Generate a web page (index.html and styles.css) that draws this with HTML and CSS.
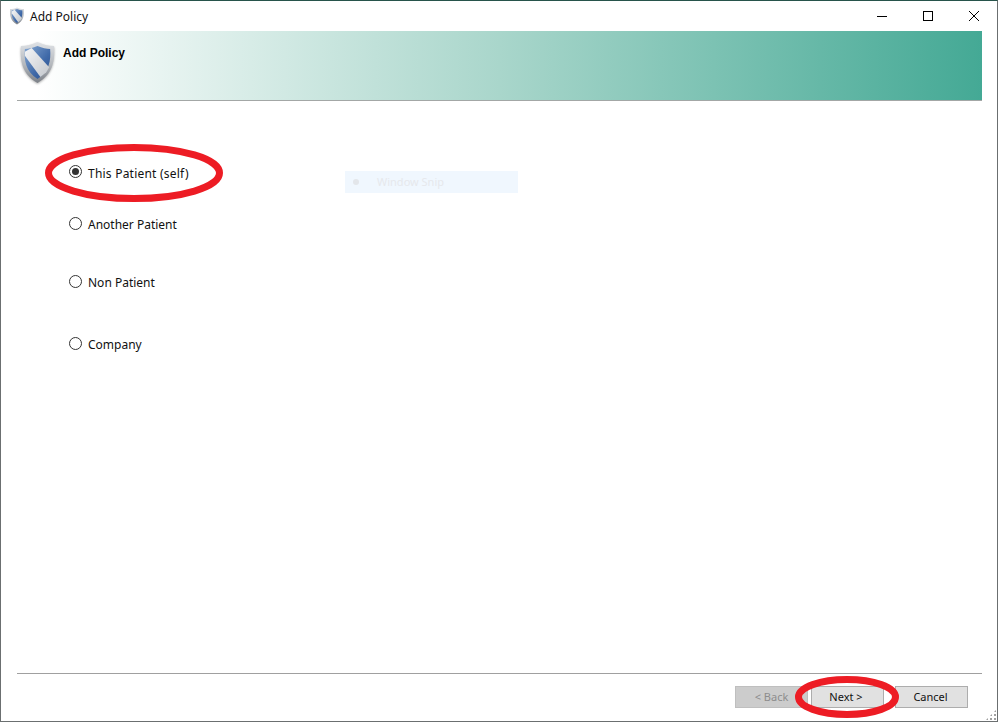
FILE: index.html
```html
<!DOCTYPE html>
<html lang="en">
<head>
<meta charset="UTF-8">
<title>Add Policy</title>
<link rel="stylesheet" href="styles.css">
</head>
<body>
<svg width="0" height="0" class="defs">
    <defs>
        <linearGradient id="rim" x1="0" y1="0" x2="0" y2="1">
            <stop offset="0" stop-color="#dfe2e6"/>
            <stop offset="0.55" stop-color="#b4b8bd"/>
            <stop offset="1" stop-color="#7b8087"/>
        </linearGradient>
        <linearGradient id="blue" x1="0" y1="0" x2="1" y2="1">
            <stop offset="0" stop-color="#86a8d2"/>
            <stop offset="0.6" stop-color="#3f69a8"/>
            <stop offset="1" stop-color="#2a4f8c"/>
        </linearGradient>
        <linearGradient id="stripe" x1="0" y1="0" x2="1" y2="1">
            <stop offset="0" stop-color="#f4f5f7"/>
            <stop offset="1" stop-color="#c3c7cc"/>
        </linearGradient>
        <symbol id="shield" viewBox="0 0 36 44">
            <path d="M18 1 C24 4 29 5 35 5 C36 20 34 34 18 43 C2 34 0 20 1 5 C7 5 12 4 18 1 Z" fill="url(#rim)"/>
            <path d="M18 5 C23 7 27 8 31 8 C32 20 30 31 18 39 C6 31 4 20 5 8 C9 8 13 7 18 5 Z" fill="url(#blue)"/>
            <path d="M5 15 L5 11 L12 7 L30 27 L27 32 L21 37 Z" fill="url(#stripe)"/>
        </symbol>
    </defs>
</svg>
<div class="window">
    <div class="titlebar">
        <svg class="title-icon"><use href="#shield"/></svg>
        <span class="title-text">Add Policy</span>
        <div class="controls">
            <svg class="control" viewBox="0 0 46 30"><path d="M18 15.5 H28" stroke="#000" fill="none"/></svg>
            <svg class="control" viewBox="0 0 46 30"><rect x="18.5" y="10.5" width="9" height="9" stroke="#000" fill="none"/></svg>
            <svg class="control" viewBox="0 0 46 30"><path d="M18 10 L28 20 M28 10 L18 20" stroke="#000" fill="none"/></svg>
        </div>
    </div>
    <div class="banner">
        <svg class="banner-icon"><use href="#shield"/></svg>
        <span class="banner-title">Add Policy</span>
    </div>
    <div class="options">
        <div class="option option-self"><span class="radio radio-on"></span>This Patient (self)</div>
        <div class="option option-another"><span class="radio"></span>Another Patient</div>
        <div class="option option-non"><span class="radio"></span>Non Patient</div>
        <div class="option option-company"><span class="radio"></span>Company</div>
    </div>
    <div class="footer">
        <button class="btn btn-disabled">&lt; Back</button>
        <button class="btn btn-next">Next &gt;</button>
        <button class="btn btn-cancel">Cancel</button>
    </div>
    <div class="grip"></div>

    <!-- faded leftover from the snipping tool -->
    <div class="ghost"><span class="ghost-dot"></span>Window Snip</div>

    <!-- red marker rings drawn over the screenshot -->
    <svg class="ring ring-self" viewBox="0 0 178 58"><ellipse cx="89" cy="29" rx="85.5" ry="25.5"/></svg>
    <svg class="ring ring-next" viewBox="0 0 104 42"><ellipse cx="52" cy="21" rx="48.5" ry="17.5"/></svg>
</div>
</body>
</html>
```

FILE: styles.css
```css
* {
    box-sizing: border-box;
}
body {
    margin: 0;
    background-color: white;
    font-family: "Noto Sans", Tahoma, sans-serif;
    font-size: 12px;
    color: #111;
}
.defs {
    display: block;
    height: 0;
}
.window {
    position: relative;
    display: flex;
    flex-direction: column;
    width: 998px;
    height: 722px;
    background-color: white;
    border: 1px solid #6b6f70;
    border-top-color: #27544b;
    overflow: hidden;
}
.titlebar {
    display: flex;
    align-items: center;
    height: 30px;
    padding-left: 8px;
    flex-shrink: 0;
}
.title-icon {
    width: 16px;
    height: 18px;
    margin-right: 5px;
}
.title-text {
    font-size: 12px;
}
.controls {
    display: flex;
    margin-left: auto;
}
.control {
    width: 46px;
    height: 30px;
}
.banner {
    display: flex;
    align-items: flex-start;
    flex-shrink: 0;
    height: 70px;
    margin: 0 15px 0 16px;
    padding-left: 3px;
    border-bottom: 1px solid #a3a7a6;
    background: linear-gradient(to right, #ffffff 2%, #a9d6cb 50%, #44a995 100%);
}
.banner-icon {
    width: 35px;
    height: 43px;
    margin-top: 10px;
    filter: drop-shadow(0 1px 1px rgba(0, 0, 0, 0.3));
}
.banner-title {
    margin: 15px 0 0 8px;
    font-family: "Liberation Sans", Arial, sans-serif;
    font-weight: bold;
    font-size: 12px;
    color: #000;
}
.options {
    flex: 1;
    padding-left: 68px;
}
.option {
    display: flex;
    align-items: center;
    height: 20px;
}
.option-self {
    margin-top: 61px;
    padding-top: 2px;
    letter-spacing: 0.22px;
}
.option-self .radio {
    margin-top: -3px;
}
.option-another {
    margin-top: 32px;
}
.option-non {
    margin-top: 38px;
}
.option-company {
    margin-top: 42px;
}
.radio {
    position: relative;
    width: 13px;
    height: 13px;
    margin-top: -1px;
    margin-right: 6px;
    border: 1px solid #333;
    border-radius: 50%;
}
.radio-on::after {
    content: "";
    position: absolute;
    top: 2px;
    left: 2px;
    width: 7px;
    height: 7px;
    border-radius: 50%;
    background-color: #333;
}
.footer {
    display: flex;
    justify-content: flex-end;
    flex-shrink: 0;
    gap: 3px;
    height: 48px;
    margin: 0 15px 0 16px;
    padding: 12px 14px 0 0;
    border-top: 1px solid #a0a0a0;
}
.btn {
    width: 73px;
    height: 22px;
    padding: 0 0 2px;
    background-color: #e1e1e1;
    border: 1px solid #adadad;
    font-family: inherit;
    font-size: 11px;
    color: #111;
}
.btn-disabled {
    background-color: #cccccc;
    border-color: #bfbfbf;
    color: #8c8c8c;
}
.btn-next {
    margin-right: 8px;
    padding-right: 3px;
}
.btn-cancel {
    padding-right: 2px;
}
.grip {
    position: absolute;
    right: 0;
    bottom: 0;
    width: 12px;
    height: 12px;
    background-image: radial-gradient(circle, #a0a0a0 1.1px, transparent 1.3px);
    background-size: 4px 4px;
    clip-path: polygon(100% 0, 100% 100%, 0 100%);
}
.ghost {
    position: absolute;
    left: 344px;
    top: 170px;
    display: flex;
    align-items: center;
    width: 173px;
    height: 22px;
    padding-bottom: 2px;
    background-color: #f0f7fe;
    font-size: 11px;
    color: #e6e8ec;
}
.ghost-dot {
    width: 6px;
    height: 6px;
    margin: 2px 18px 0 8px;
    border-radius: 50%;
    background-color: #e3e6ea;
}
.ring {
    position: absolute;
    fill: none;
    stroke: #ed1c24;
    stroke-width: 7;
}
.ring-self {
    left: 44px;
    top: 143px;
    width: 178px;
    height: 58px;
}
.ring-next {
    left: 794px;
    top: 675px;
    width: 104px;
    height: 42px;
}
```
